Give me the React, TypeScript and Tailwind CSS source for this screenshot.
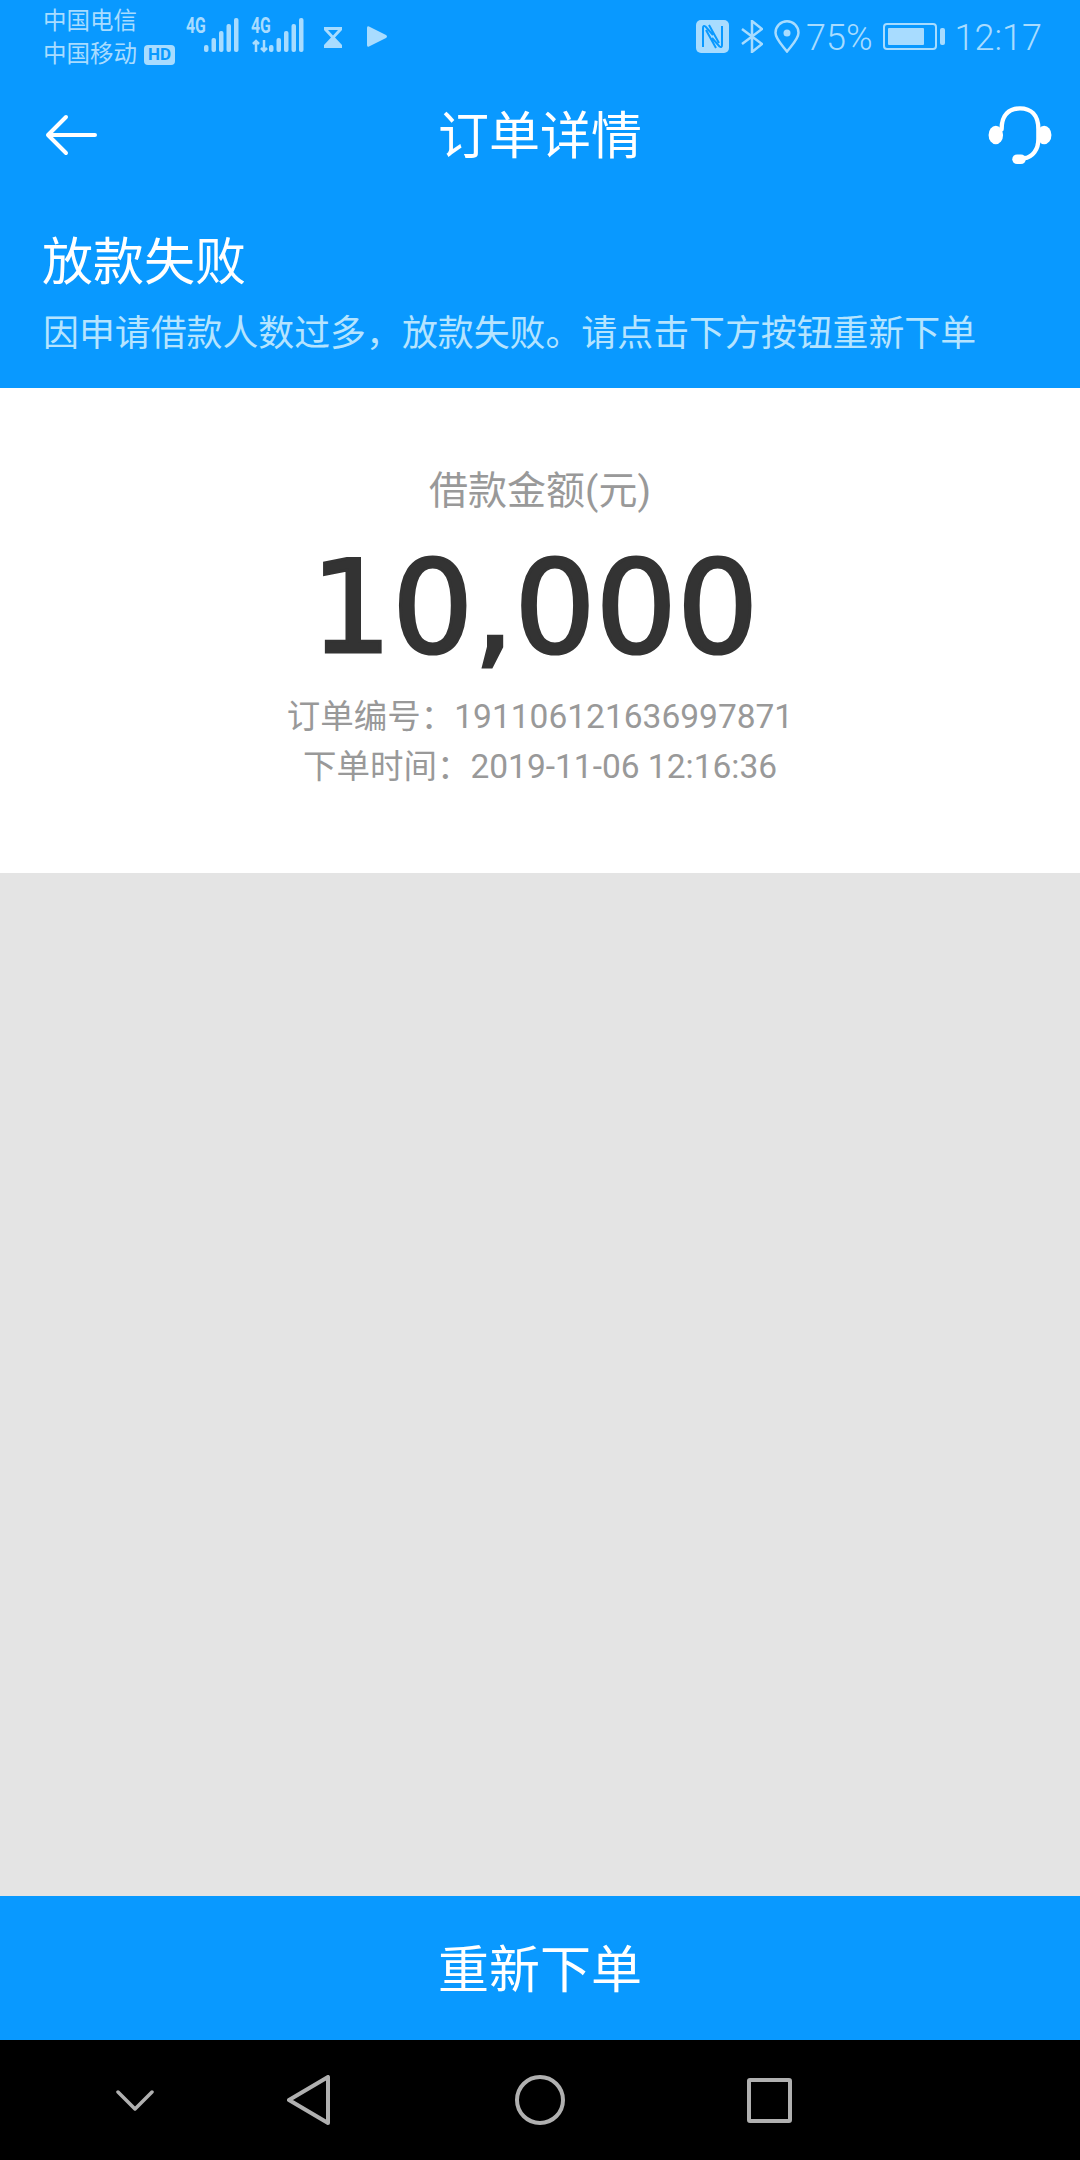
const cjk = "font-['Roboto','Noto_Sans_CJK_SC',sans-serif]";

function Signal({ arrows }: { arrows?: boolean }) {
  const bars = [
    { x: 18, h: 7 },
    { x: 25.500, h: 14 },
    { x: 33, h: 21 },
    { x: 40.500, h: 28 },
    { x: 48, h: 34 },
  ];
  return (
    <div className="relative h-[36px] w-[53px]">
      <span className="absolute left-0 top-[-3px] origin-left scale-x-[.72] font-['Roboto',sans-serif] text-[22px] font-bold leading-[24px] text-[#a8dcff]">4G</span>
      {arrows && (
        <svg className="absolute bottom-0 left-0" width="19" height="14" viewBox="0 0 19 14" fill="none" stroke="#a8dcff" strokeWidth="2.500">
          <path d="M5 13V2M2 5l3-3 3 3M13 1v11M10 9l3 3 3-3" />
        </svg>
      )}
      <svg className="absolute inset-0" width="53" height="36" viewBox="0 0 53 36" fill="#a8dcff">
        {bars.map((b) => (
          <rect key={b.x} x={b.x} y={35 - b.h} width="4.500" height={b.h} rx="2" />
        ))}
      </svg>
    </div>
  );
}

function StatusBar() {
  return (
    <div className="flex h-[72px] items-start justify-between pl-[43px] pr-[38px] text-[#a8dcff]">
      <div className="flex items-start">
        <div className={`${cjk} pt-[5px] text-[23.500px] leading-[33px]`}>
          <div>中国电信</div>
          <div className="flex items-center">
            中国移动
            <span className="ml-[7px] flex h-[20px] w-[31px] items-center justify-center rounded-[4px] bg-[#a8dcff] font-['Roboto',sans-serif] text-[17px] font-bold leading-none text-[#0999ff]">HD</span>
          </div>
        </div>
        <div className="ml-[11px] mt-[17px]">
          <Signal />
        </div>
        <div className="ml-[12px] mt-[17px]">
          <Signal arrows />
        </div>
        <svg className="ml-[20px] mt-[27px]" width="18" height="21" viewBox="0 0 18 21" fill="#a8dcff">
          <path d="M0 0h18v3L11 10.500 18 18v3H0v-3L7 10.500 0 3zM4 3l5 5.500L14 3z" fillRule="evenodd" />
        </svg>
        <svg className="ml-[25px] mt-[24px]" width="21" height="25" viewBox="0 0 21 25" fill="#a8dcff">
          <path d="M2 2.500 19 11q2 1.500 0 3L2 22.500Q0 23.500 0 21V4Q0 1.500 2 2.500z" />
        </svg>
      </div>
      <div className="flex items-start">
        <svg className="mt-[20px]" width="33" height="33" viewBox="0 0 33 33">
          <rect width="33" height="33" rx="5" fill="#a8dcff" />
          <path d="M7 27V8q0-3 2.500-1.500L17 15M26 6v19q0 3-2.500 1.500L16 18M13 5l10 18M10 10l10 18" fill="none" stroke="#0999ff" strokeWidth="2" />
        </svg>
        <svg className="ml-[12px] mt-[20px]" width="22" height="33" viewBox="0 0 22 33" fill="none" stroke="#a8dcff" strokeWidth="2.500">
          <path d="M1 9l20 15-10 8V1l10 8L1 24" />
        </svg>
        <svg className="ml-[11px] mt-[20px]" width="26" height="33" viewBox="0 0 26 33" fill="none" stroke="#a8dcff" strokeWidth="2.500">
          <path d="M13 31.500C8 25 1.500 19 1.500 12.800a11.500 11.500 0 0 1 23 0C24.500 19 18 25 13 31.500z" />
          <circle cx="13" cy="13" r="3.500" fill="#a8dcff" stroke="none" />
        </svg>
        <span className="ml-[6px] mt-[18px] font-['Roboto',sans-serif] text-[36px] font-light leading-[40px]">75%</span>
        <div className="ml-[10px] mt-[23px] flex items-center">
          <div className="h-[27px] w-[54px] rounded-[4px] border-2 border-[#a8dcff] p-[3px]">
            <div className="h-full w-[36px] rounded-[1px] bg-[#a8dcff]" />
          </div>
          <div className="ml-[3px] h-[17px] w-[5px] rounded-[2px] bg-[#a8dcff]" />
        </div>
        <span className="ml-[10px] mt-[18px] font-['Roboto',sans-serif] text-[36px] font-light leading-[40px]">12:17</span>
      </div>
    </div>
  );
}

export default function App() {
  return (
    <div className={`${cjk} flex h-[2160px] w-[1080px] flex-col overflow-hidden bg-[#e4e4e4]`}>
      <div className="h-[388px] bg-[#0999ff] text-white">
        <StatusBar />
        <div className="flex h-[126px] items-center justify-between pl-[45px] pr-[28px]">
          <div className="w-[100px]">
            <svg width="52" height="42" viewBox="0 0 52 42" fill="none" stroke="#fff" strokeWidth="4" strokeLinecap="round" strokeLinejoin="round">
              <path d="M50 21H3M21 3 3 21l18 18" />
            </svg>
          </div>
          <span className="pt-[3px] text-[51px] leading-none">订单详情</span>
          <div className="flex w-[117px] justify-end pt-[2px]">
            <svg width="64" height="60" viewBox="0 0 66 62" fill="none">
              <path d="M14 24C14 9 22 2.500 33 2.500S52 9 52 24v10c0 11-6 19-15 20" stroke="#fff" strokeWidth="4.500" strokeLinecap="round" />
              <ellipse cx="8" cy="30" rx="7.500" ry="9.500" fill="#fff" />
              <ellipse cx="58" cy="30" rx="7.500" ry="9.500" fill="#fff" />
              <rect x="25" y="50" width="14" height="10" rx="5" fill="#fff" />
            </svg>
          </div>
        </div>
        <div className="pl-[42px] pt-[33px]">
          <div className="text-[51px] leading-[64px]">放款失败</div>
          <div className="mt-[14px] pl-[1px] text-[35.900px] leading-[50px] text-[#b5e4ff]">因申请借款人数过多，放款失败。请点击下方按钮重新下单</div>
        </div>
      </div>

      <div className="flex h-[485px] flex-col items-center bg-white pt-[78px]">
        <div className="text-[39px] leading-[50px] text-[#999999]">借款金额(元)</div>
        <div className="mb-[-2px] mt-[19px] pr-[11px] font-['DejaVu_Sans',sans-serif] text-[128px] font-normal leading-[145px] text-[#333333] [-webkit-text-stroke:3px_#333333]">10,000</div>
        <div className="mt-[14px] text-[33.500px] leading-[50px] text-[#999999]">订单编号：191106121636997871</div>
        <div className="text-[33.500px] leading-[50px] text-[#999999]">下单时间：2019-11-06 12:16:36</div>
      </div>

      <div className="flex-1" />

      <div className="flex h-[144px] items-center justify-center bg-[#0999ff] pt-[6px] text-[51px] text-white">重新下单</div>

      <div className="flex h-[120px] items-center bg-black pl-[116px]">
        <svg width="38" height="21" viewBox="0 0 38 21" fill="none" stroke="#b0b0b0" strokeWidth="3.500" strokeLinecap="round" strokeLinejoin="round">
          <path d="M2 2l17 17L36 2" />
        </svg>
        <svg className="ml-[133px]" width="43" height="50" viewBox="0 0 43 50" fill="none" stroke="#b0b0b0" strokeWidth="4" strokeLinejoin="round">
          <path d="M41 2v46L2 25z" />
        </svg>
        <div className="ml-[185px] h-[50px] w-[50px] rounded-full border-4 border-[#b0b0b0]" />
        <div className="ml-[182px] h-[45px] w-[45px] rounded-[3px] border-4 border-[#b0b0b0]" />
      </div>
    </div>
  );
}
